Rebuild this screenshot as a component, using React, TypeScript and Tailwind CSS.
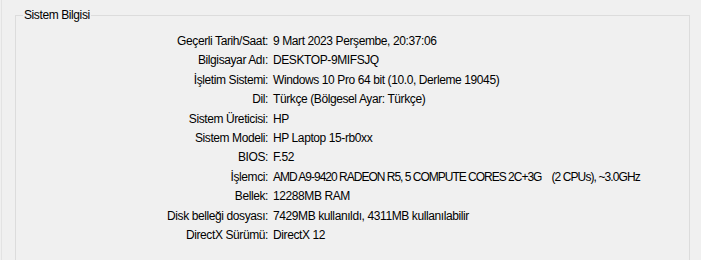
import React from "react";

const rows: [string, React.ReactNode][] = [
  ["Geçerli Tarih/Saat:", "9 Mart 2023 Perşembe, 20:37:06"],
  ["Bilgisayar Adı:", "DESKTOP-9MIFSJQ"],
  ["İşletim Sistemi:", "Windows 10 Pro 64 bit (10.0, Derleme 19045)"],
  ["Dil:", "Türkçe (Bölgesel Ayar: Türkçe)"],
  ["Sistem Üreticisi:", "HP"],
  ["Sistem Modeli:", "HP Laptop 15-rb0xx"],
  ["BIOS:", "F.52"],
  [
    "İşlemci:",
    <>
      <span className="tracking-[-1px]">AMD A9-9420 RADEON R5, 5 COMPUTE CORES 2C+3G</span>
      <span className="ml-[10px] tracking-[-0.9px]">(2 CPUs), ~3.0GHz</span>
    </>,
  ],
  ["Bellek:", "12288MB RAM"],
  ["Disk belleği dosyası:", "7429MB kullanıldı, 4311MB kullanılabilir"],
  ["DirectX Sürümü:", "DirectX 12"],
];

export default function App() {
  return (
    <div
      className="w-[701px] h-[260px] overflow-hidden bg-[#f0f0f0] pl-px text-[12px] tracking-[-0.4px] text-black"
      style={{ fontFamily: '"Liberation Sans", Arial, sans-serif' }}
    >
      <div className="h-full border-l border-[#e3e3e3] pl-[13px] pt-[15px] pr-[11px]">
        <div className="relative h-[300px] border border-[#dcdcdc] pt-[16px]">
          <div className="absolute left-[7px] top-[-9px] bg-[#f0f0f0] px-[1px] leading-[16px]">
            Sistem Bilgisi
          </div>
          {rows.map(([k, v]) => (
            <div key={k} className="flex h-[19.4px] items-center leading-[19.4px]">
              <div className="w-[252px] shrink-0 text-right">{k}</div>
              <div className="ml-[5px] whitespace-pre">{v}</div>
            </div>
          ))}
        </div>
      </div>
    </div>
  );
}
